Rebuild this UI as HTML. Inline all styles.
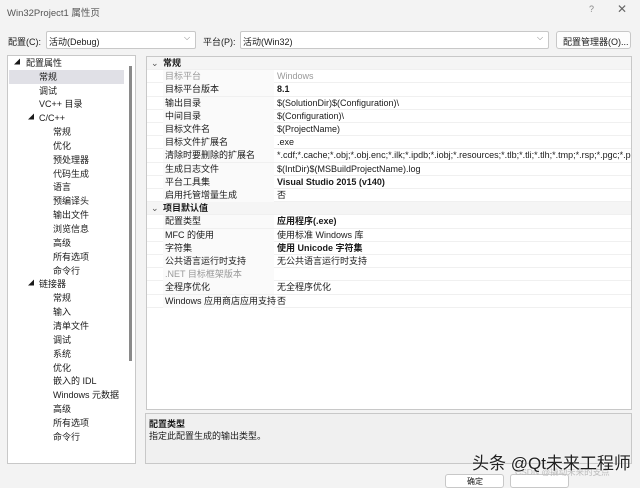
<!DOCTYPE html><html><head><meta charset="utf-8"><style>
*{margin:0;padding:0;box-sizing:border-box}
body{width:640px;height:483px;background:#f3f3f3;font-family:"Liberation Sans","Noto Sans CJK SC",sans-serif;font-size:9px;color:#1a1a1a;position:relative;overflow:hidden}
.a{position:absolute;white-space:nowrap}
.box{position:absolute;border:1px solid #c8c8c8;background:#fff}
.tree div{position:absolute;white-space:nowrap;height:14px;line-height:14px}
.g{position:absolute;left:146px;top:56px;width:486px;height:354px;background:#fff;border:1px solid #c8c8c8;overflow:hidden}
.r{position:absolute;left:0;width:486px;height:13.2px;line-height:13px;border-bottom:1px solid #f0f0f0;white-space:nowrap}
.r .n{position:absolute;left:16px;width:111px;height:13px;background:#fafafa;padding-left:2px}
.r .v{position:absolute;left:128px;padding-left:2px}
.h{font-weight:bold}
.dis{color:#999}
</style></head><body>
<div class="a" style="left:7px;top:5px;font-size:9.5px;color:#555">Win32Project1 属性页</div>
<div class="a" style="left:589px;top:4px;color:#888;font-size:9px">?</div>
<div class="a" style="left:617px;top:2px;color:#666;font-size:12px">✕</div>
<div class="a" style="left:8px;top:35px">配置(C):</div>
<div class="box" style="left:46px;top:31px;width:150px;height:18px;border-radius:2px"></div>
<div class="a" style="left:49px;top:35px">活动(Debug)</div>
<div class="a" style="left:184px;top:33px;color:#777;font-size:8px">⌵</div>
<div class="a" style="left:203px;top:35px">平台(P):</div>
<div class="box" style="left:240px;top:31px;width:309px;height:18px;border-radius:2px"></div>
<div class="a" style="left:243px;top:35px">活动(Win32)</div>
<div class="a" style="left:537px;top:33px;color:#777;font-size:8px">⌵</div>
<div class="box" style="left:556px;top:31px;width:75px;height:18px;border-radius:3px;background:#fdfdfd"></div>
<div class="a" style="left:563px;top:35px">配置管理器(O)...</div>

<div class="box" style="left:7px;top:55px;width:129px;height:409px"></div>
<div class="a" style="left:129px;top:66px;width:3px;height:295px;background:#8a8a8a"></div>
<div class="a" style="left:9px;top:70px;width:115px;height:14px;background:#e0e0e6"></div>
<div class="tree" style="position:absolute;left:0;top:56px">
<div style="left:14px;top:0;font-size:6px">◢</div><div style="left:26px;top:0">配置属性</div>
<div style="left:39px;top:14px">常规</div>
<div style="left:39px;top:28px">调试</div>
<div style="left:39px;top:41px">VC++ 目录</div>
<div style="left:28px;top:55px;font-size:6px">◢</div><div style="left:39px;top:55px">C/C++</div>
<div style="left:53px;top:69px">常规</div>
<div style="left:53px;top:83px">优化</div>
<div style="left:53px;top:97px">预处理器</div>
<div style="left:53px;top:111px">代码生成</div>
<div style="left:53px;top:124px">语言</div>
<div style="left:53px;top:138px">预编译头</div>
<div style="left:53px;top:152px">输出文件</div>
<div style="left:53px;top:166px">浏览信息</div>
<div style="left:53px;top:180px">高级</div>
<div style="left:53px;top:194px">所有选项</div>
<div style="left:53px;top:208px">命令行</div>
<div style="left:28px;top:221px;font-size:6px">◢</div><div style="left:39px;top:221px">链接器</div>
<div style="left:53px;top:235px">常规</div>
<div style="left:53px;top:249px">输入</div>
<div style="left:53px;top:263px">清单文件</div>
<div style="left:53px;top:277px">调试</div>
<div style="left:53px;top:291px">系统</div>
<div style="left:53px;top:305px">优化</div>
<div style="left:53px;top:318px">嵌入的 IDL</div>
<div style="left:53px;top:332px">Windows 元数据</div>
<div style="left:53px;top:346px">高级</div>
<div style="left:53px;top:360px">所有选项</div>
<div style="left:53px;top:374px">命令行</div>
</div>

<div class="g">
<div class="r h" style="top:0;background:#f5f5f5"><span class="a" style="left:4px;font-weight:normal;color:#555">⌄</span><span class="a" style="left:16px">常规</span></div>
<div class="r" style="top:13.2px"><span class="n dis">目标平台</span><span class="v dis">Windows</span></div>
<div class="r" style="top:26.4px"><span class="n">目标平台版本</span><span class="v h">8.1</span></div>
<div class="r" style="top:39.6px"><span class="n">输出目录</span><span class="v">$(SolutionDir)$(Configuration)\</span></div>
<div class="r" style="top:52.8px"><span class="n">中间目录</span><span class="v">$(Configuration)\</span></div>
<div class="r" style="top:66px"><span class="n">目标文件名</span><span class="v">$(ProjectName)</span></div>
<div class="r" style="top:79.2px"><span class="n">目标文件扩展名</span><span class="v">.exe</span></div>
<div class="r" style="top:92.4px"><span class="n">清除时要删除的扩展名</span><span class="v">*.cdf;*.cache;*.obj;*.obj.enc;*.ilk;*.ipdb;*.iobj;*.resources;*.tlb;*.tli;*.tlh;*.tmp;*.rsp;*.pgc;*.pgd</span></div>
<div class="r" style="top:105.6px"><span class="n">生成日志文件</span><span class="v">$(IntDir)$(MSBuildProjectName).log</span></div>
<div class="r" style="top:118.8px"><span class="n">平台工具集</span><span class="v h">Visual Studio 2015 (v140)</span></div>
<div class="r" style="top:132px"><span class="n">启用托管增量生成</span><span class="v">否</span></div>
<div class="r h" style="top:145.2px;background:#f5f5f5"><span class="a" style="left:4px;font-weight:normal;color:#555">⌄</span><span class="a" style="left:16px">项目默认值</span></div>
<div class="r" style="top:158.4px"><span class="n">配置类型</span><span class="v h">应用程序(.exe)</span></div>
<div class="r" style="top:171.6px"><span class="n">MFC 的使用</span><span class="v">使用标准 Windows 库</span></div>
<div class="r" style="top:184.8px"><span class="n">字符集</span><span class="v h">使用 Unicode 字符集</span></div>
<div class="r" style="top:198px"><span class="n">公共语言运行时支持</span><span class="v">无公共语言运行时支持</span></div>
<div class="r" style="top:211.2px"><span class="n dis">.NET 目标框架版本</span><span class="v"></span></div>
<div class="r" style="top:224.4px"><span class="n">全程序优化</span><span class="v">无全程序优化</span></div>
<div class="r" style="top:237.6px"><span class="n">Windows 应用商店应用支持</span><span class="v">否</span></div>
</div>

<div class="box" style="left:145px;top:413px;width:487px;height:51px;background:#f0f0f0"></div>
<div class="a h" style="left:149px;top:417px">配置类型</div>
<div class="a" style="left:149px;top:429px">指定此配置生成的输出类型。</div>

<div class="box" style="left:445px;top:474px;width:59px;height:14px;border-radius:3px"></div>
<div class="box" style="left:510px;top:474px;width:59px;height:14px;border-radius:3px"></div>
<div class="a" style="left:467px;top:476px;font-size:8px">确定</div>
<div class="a" style="left:515px;top:466px;color:#bbb;font-size:8.5px">CSDN @撬动未来的支点</div>
<div class="a" style="left:472px;top:449px;font-size:17px;color:#222;text-shadow:0 0 2px #fff">头条 @Qt未来工程师</div>
</body></html>
